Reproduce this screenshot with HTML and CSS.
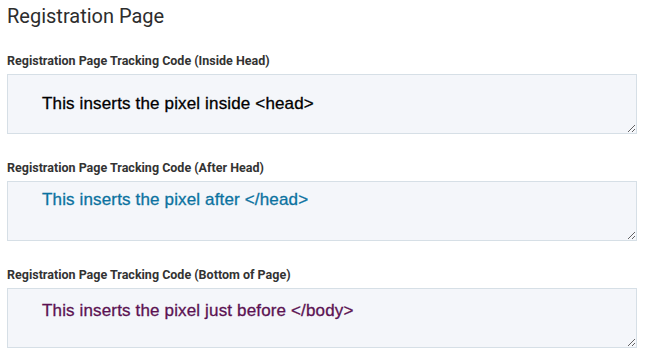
FILE: index.html
```html
<!DOCTYPE html>
<html lang="en">

<head>
    <meta charset="UTF-8">
    <meta name="viewport" content="width=device-width, initial-scale=1.0">
    <title>Registration Page</title>
    <link rel="stylesheet" href="styles.css">
</head>

<body>
    <div class="container">
        <h1>Registration Page</h1>

        <div class="field">
            <label for="codeHead">Registration Page Tracking Code (Inside Head)</label>
            <textarea id="codeHead" class="code code-head" spellcheck="false">This inserts the pixel inside &lt;head&gt;</textarea>
        </div>

        <div class="field">
            <label for="codeAfter">Registration Page Tracking Code (After Head)</label>
            <textarea id="codeAfter" class="code code-after" spellcheck="false">This inserts the pixel after &lt;/head&gt;</textarea>
        </div>

        <div class="field">
            <label for="codeBottom">Registration Page Tracking Code (Bottom of Page)</label>
            <textarea id="codeBottom" class="code code-bottom" spellcheck="false">This inserts the pixel just before &lt;/body&gt;</textarea>
        </div>
    </div>
</body>

</html>
```

FILE: styles.css
```css
body {
    background-color: #ffffff;
    color: #333333;
    font-family: Roboto, Arial, sans-serif;
    margin: 0;
    padding: 0;
}

.container {
    padding: 4px 14px 0 7px;
}

h1 {
    font-size: 20px;
    font-weight: 400;
    line-height: 24px;
    color: #2d2d2d;
    margin: 0 0 26px 0;
}

.field {
    display: flex;
    flex-direction: column;
    margin-bottom: 27px;
}

.field label {
    font-size: 12.5px;
    font-weight: 700;
    line-height: 14px;
    color: #333333;
    margin-bottom: 6px;
}

.code {
    box-sizing: border-box;
    width: 100%;
    height: 60px;
    margin: 0;
    padding: 9px 10px 0 34px;
    background-color: #f4f6fa;
    border: 1px solid #d6dfe6;
    border-radius: 0;
    font-family: "Liberation Sans", Arial, sans-serif;
    font-size: 17px;
    letter-spacing: 0.15px;
    line-height: 18px;
    -webkit-text-stroke: 0.3px currentColor;
    resize: vertical;
    outline: none;
}

.code-head {
    padding-top: 20px;
    color: #000000;
}

.code-after {
    padding-top: 9px;
    color: #0b72a0;
}

.code-bottom {
    padding-top: 13px;
    color: #5b1252;
}
```
